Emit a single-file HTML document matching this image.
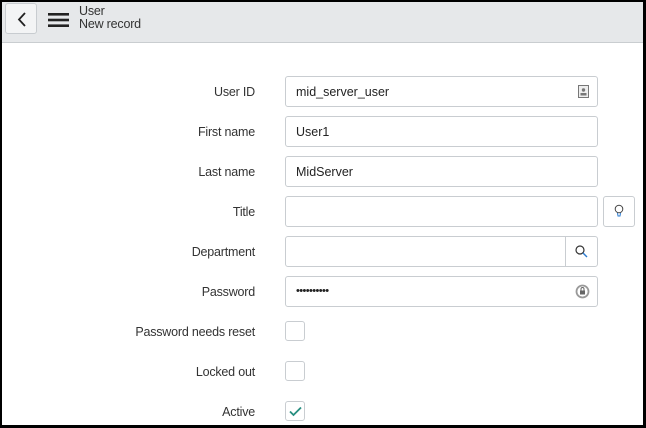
<!DOCTYPE html>
<html><head><style>
*{box-sizing:border-box;margin:0;padding:0}
body{width:646px;height:428px;overflow:hidden;background:#000;font-family:"Liberation Sans",sans-serif;color:#2e2e2e}
.frame{position:absolute;left:2px;top:2px;width:641px;height:423px;background:#fff;overflow:hidden}
.hdr{position:absolute;left:0;top:0;width:641px;height:41px;background:#e6e8ea;border-bottom:1px solid #c9cdd0}
.back{position:absolute;left:3px;top:1px;width:32px;height:31px;border:1px solid #c8ccd0;border-radius:3px;background:#f3f4f5}
.t1{position:absolute;left:77px;top:2px;font-size:12.5px;color:#333;letter-spacing:-0.2px}
.t2{position:absolute;left:77px;top:15px;font-size:12.5px;color:#333;letter-spacing:-0.2px}
.lbl{position:absolute;right:388px;font-size:12.5px;color:#333;letter-spacing:-0.2px;white-space:nowrap}
.inp{position:absolute;left:283px;width:313px;height:31px;border:1px solid #c9cdd1;border-radius:3px;font-size:12.5px;padding:8px 10px 0;color:#222}
.cb{position:absolute;left:283px;width:20px;height:20px;border:1px solid #c9cdd1;border-radius:3px}
</style></head><body><div class="frame">
<div class="hdr">
 <div class="back"><svg width="32" height="31"><path d="M19 9 L13 15.5 L19 22" stroke="#222" stroke-width="1.8" fill="none"/></svg></div>
 <svg style="position:absolute;left:46px;top:10px" width="22" height="16"><rect x="0" y="1" width="21" height="2.6" fill="#222"/><rect x="0" y="6.7" width="21" height="2.6" fill="#222"/><rect x="0" y="12.4" width="21" height="2.6" fill="#222"/></svg>
 <div class="t1">User</div><div class="t2">New record</div>
</div>
<div class="lbl" style="top:83px">User ID</div>
<div class="inp" style="top:74px">mid_server_user<svg style="position:absolute;right:8px;top:8px" width="11" height="13"><rect x="0.5" y="0.5" width="10" height="12" fill="#eee" stroke="#777"/><circle cx="5.5" cy="5" r="1.7" fill="#777"/><rect x="2.5" y="8" width="6" height="2.5" fill="#777"/></svg></div>
<div class="lbl" style="top:123px">First name</div>
<div class="inp" style="top:114px">User1</div>
<div class="lbl" style="top:163px">Last name</div>
<div class="inp" style="top:154px">MidServer</div>
<div class="lbl" style="top:203px">Title</div>
<div class="inp" style="top:194px"></div>
<div class="inp" style="top:194px;left:601px;width:32px"><svg style="position:absolute;left:9px;top:7px" width="12" height="15"><circle cx="6" cy="5" r="3.8" fill="none" stroke="#444" stroke-width="1"/><path d="M4.5 9 L5 12 L7 12 L7.5 9" fill="none" stroke="#2b7bd0" stroke-width="1"/></svg></div>
<div class="lbl" style="top:243px">Department</div>
<div class="inp" style="top:234px"><div style="position:absolute;right:31px;top:0;width:1px;height:29px;background:#c9cdd1"></div><svg style="position:absolute;right:9px;top:8px" width="13" height="13"><circle cx="5" cy="5" r="4" fill="none" stroke="#333" stroke-width="1.2"/><path d="M8 8 L12 12" stroke="#2b7bd0" stroke-width="1.4"/></svg></div>
<div class="lbl" style="top:283px">Password</div>
<div class="inp" style="top:274px;font-size:11px;letter-spacing:-0.6px;padding-top:8px">••••••••••<svg style="position:absolute;right:7px;top:7px" width="15" height="15"><circle cx="7.5" cy="7.5" r="6" fill="none" stroke="#999" stroke-width="1.8"/><rect x="5" y="6.5" width="5" height="4" fill="#666"/><path d="M6 6.5 V5 a1.5 1.5 0 0 1 3 0 V6.5" fill="none" stroke="#666"/></svg></div>
<div class="lbl" style="top:323px">Password needs reset</div>
<div class="cb" style="top:319px"></div>
<div class="lbl" style="top:363px">Locked out</div>
<div class="cb" style="top:359px"></div>
<div class="lbl" style="top:403px">Active</div>
<div class="cb" style="top:399px"><svg style="position:absolute;left:3px;top:4px" width="13" height="11"><path d="M1 5.5 L4.5 9 L12 1.5" fill="none" stroke="#278e80" stroke-width="1.8"/></svg></div>
</div></body></html>
